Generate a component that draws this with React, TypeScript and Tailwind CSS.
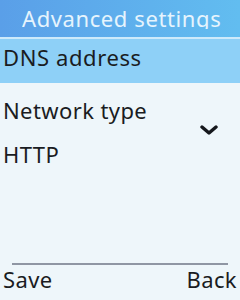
export default function App() {
  return (
    <div className="w-[240px] h-[300px] overflow-hidden flex flex-col bg-[#eef6fa] text-[#1a1c22] font-['Noto_Sans',sans-serif] tracking-[0.4px]">
      <div className="h-[37px] shrink-0 bg-gradient-to-r from-[#5a9fe8] to-[#62bdf0] pl-[22px] pr-[19px] pt-[7px]">
        <div className="overflow-hidden whitespace-nowrap text-[22px] text-[#e6f4fd] leading-none tracking-[0.6px]">Advanced settings</div>
      </div>
      <div className="h-[2px] shrink-0 bg-[#cdeafb]" />
      <div className="h-[44px] shrink-0 bg-[#8ed0f7] pl-[3px] pt-[7px]">
        <span className="block text-[22px] leading-none tracking-[0.6px]">DNS address</span>
      </div>
      <div className="flex-1 flex flex-col">
        <span className="block pl-[3px] pt-[16px] text-[22px] leading-none">Network type</span>
        <div className="flex justify-end pr-[22px] pt-[4px]">
          <svg width="18" height="10" viewBox="0 0 18 10" className="text-[#15171c]">
            <polyline points="2,2 9,8 16,2" fill="none" stroke="currentColor" strokeWidth="3.4" strokeLinecap="round" strokeLinejoin="round" />
          </svg>
        </div>
        <span className="block pl-[3px] pt-[8px] text-[22px] leading-none">HTTP</span>
      </div>
      <div className="mx-[12px] h-[2px] shrink-0 bg-[#8f96a3]" />
      <div className="h-[35px] shrink-0 flex justify-between pl-[3px] pr-[3px] pt-[3px]">
        <span className="text-[22px] leading-none">Save</span>
        <span className="text-[22px] leading-none">Back</span>
      </div>
    </div>
  );
}
